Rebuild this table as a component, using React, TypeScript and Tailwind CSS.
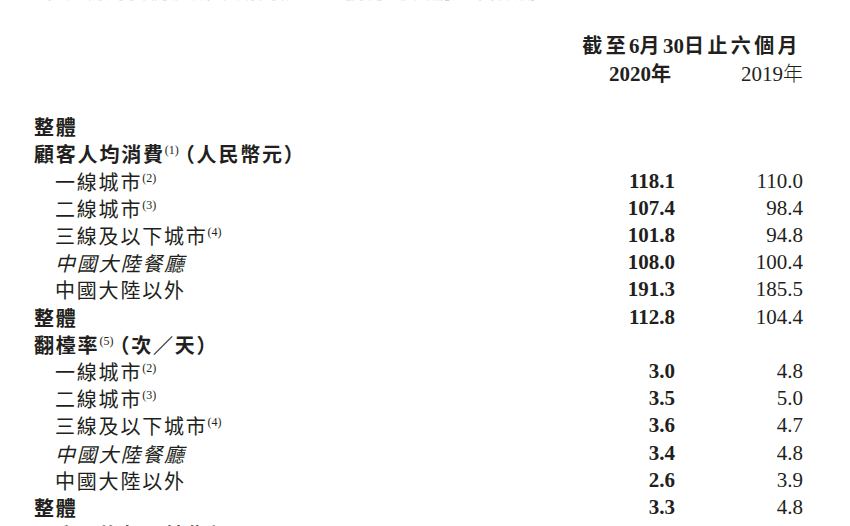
const serif = "font-['Liberation_Serif','Times_New_Roman',serif]"
const cjk = "font-['Noto_Sans_CJK_TC','Noto_Sans_CJK_SC',sans-serif]"

type Row = {
  label: string
  note?: string
  suffix?: string
  kind: 'head' | 'sub' | 'italic' | 'total'
  a?: string
  b?: string
}

const rows: Row[] = [
  { label: '整體', kind: 'head' },
  { label: '顧客人均消費', note: '(1)', suffix: '（人民幣元）', kind: 'head' },
  { label: '一線城市', note: '(2)', kind: 'sub', a: '118.1', b: '110.0' },
  { label: '二線城市', note: '(3)', kind: 'sub', a: '107.4', b: '98.4' },
  { label: '三線及以下城市', note: '(4)', kind: 'sub', a: '101.8', b: '94.8' },
  { label: '中國大陸餐廳', kind: 'italic', a: '108.0', b: '100.4' },
  { label: '中國大陸以外', kind: 'sub', a: '191.3', b: '185.5' },
  { label: '整體', kind: 'total', a: '112.8', b: '104.4' },
  { label: '翻檯率', note: '(5)', suffix: '（次／天）', kind: 'head' },
  { label: '一線城市', note: '(2)', kind: 'sub', a: '3.0', b: '4.8' },
  { label: '二線城市', note: '(3)', kind: 'sub', a: '3.5', b: '5.0' },
  { label: '三線及以下城市', note: '(4)', kind: 'sub', a: '3.6', b: '4.7' },
  { label: '中國大陸餐廳', kind: 'italic', a: '3.4', b: '4.8' },
  { label: '中國大陸以外', kind: 'sub', a: '2.6', b: '3.9' },
  { label: '整體', kind: 'total', a: '3.3', b: '4.8' },
  { label: '同店平均每日銷售額', kind: 'head' },
]

function Label({ row }: { row: Row }) {
  const bold = row.kind === 'head' || row.kind === 'total'
  return (
    <div
      className={`${cjk} text-[20px] leading-[27px] tracking-[1.8px] whitespace-nowrap ${bold ? 'font-bold' : 'font-normal pl-[21px]'} ${row.kind === 'italic' ? 'italic' : ''}`}
    >
      {row.label}
      {row.note && (
        <span className={`${serif} text-[12px] leading-none font-normal tracking-normal align-[8px] mr-[2px]`}>{row.note}</span>
      )}
      {row.suffix && <span className="-ml-[6px]">{row.suffix}</span>}
    </div>
  )
}

export default function App() {
  return (
    <div className="w-[850px] h-[526px] overflow-hidden bg-white text-[#231f20]">
      <div className="h-px overflow-hidden flex items-end pl-[40px]">
        <span className={`${cjk} text-[20px] leading-[20px] tracking-[1.8px] whitespace-nowrap text-[#d4d4d4]`}>
          下表載列我們於所示期間按地區劃分的餐廳經營數據：
        </span>
      </div>

      <div className="mt-[30.6px] pl-[34px] w-[803px]">
        <div className="flex justify-end items-center h-[27.2px] pr-[2px]">
          <span className={`${cjk} font-bold text-[20px] leading-[27px] tracking-[3.4px] whitespace-nowrap`}>
            截至<span className={`${serif} text-[21px] tracking-normal`}>6</span>月
            <span className={`${serif} text-[21px] tracking-normal`}>30</span>日止六個月
          </span>
        </div>
        <div className="grid grid-cols-[1fr_130px_128px] items-center h-[27.2px] leading-[27px]">
          <div />
          <div className={`text-right pr-[4px] ${serif} font-bold text-[21px]`}>
            2020<span className={`${cjk} text-[20px]`}>年</span>
          </div>
          <div className={`text-right ${serif} text-[21px]`}>
            2019<span className={`${cjk} text-[20px] font-light`}>年</span>
          </div>
        </div>
        <div className="h-[27.2px]" />

        {rows.map((row, i) => (
          <div key={i} className="grid grid-cols-[1fr_130px_128px] items-center h-[27.2px] leading-[27px]">
            <Label row={row} />
            <div className={`text-right ${serif} font-bold text-[21px]`}>{row.a}</div>
            <div className={`text-right ${serif} text-[21px]`}>{row.b}</div>
          </div>
        ))}
      </div>
    </div>
  )
}
